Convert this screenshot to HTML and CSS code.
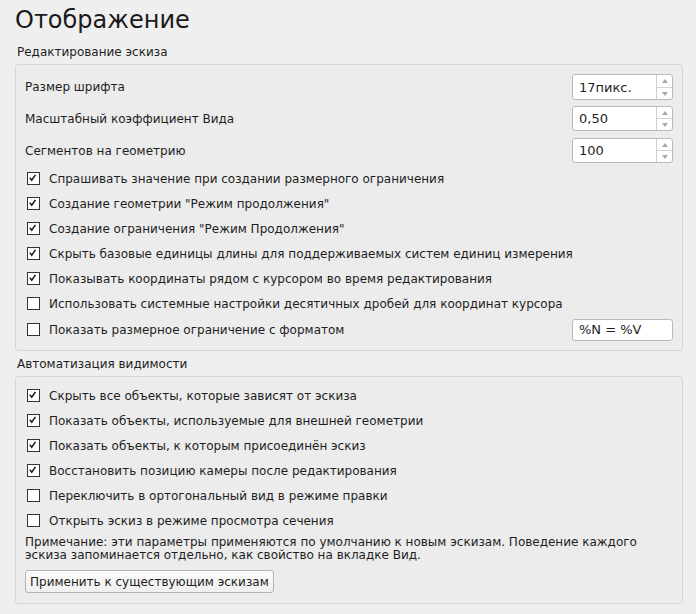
FILE: index.html
```html
<!DOCTYPE html>
<html lang="ru">
<head>
<meta charset="utf-8">
<title>Отображение</title>
<link rel="stylesheet" href="styles.css">
</head>
<body>
<div class="page">
  <h1 class="title">Отображение</h1>

  <div class="section-label">Редактирование эскиза</div>
  <div class="group g1">
    <div class="spin-row r1">
      <span class="lbl">Размер шрифта</span>
      <div class="spin"><span class="val">17пикс.</span><span class="arrows"><span class="up"></span><span class="down"></span></span></div>
    </div>
    <div class="spin-row r2">
      <span class="lbl">Масштабный коэффициент Вида</span>
      <div class="spin"><span class="val">0,50</span><span class="arrows"><span class="up"></span><span class="down"></span></span></div>
    </div>
    <div class="spin-row r3">
      <span class="lbl">Сегментов на геометрию</span>
      <div class="spin"><span class="val">100</span><span class="arrows"><span class="up"></span><span class="down"></span></span></div>
    </div>
    <div class="checks">
      <div class="check on"><span class="box"><svg viewBox="0 0 13 13"><path d="M3.2 6.6 L5.4 9.4 L9.8 3.2"/></svg></span><span>Спрашивать значение при создании размерного ограничения</span></div>
      <div class="check on"><span class="box"><svg viewBox="0 0 13 13"><path d="M3.2 6.6 L5.4 9.4 L9.8 3.2"/></svg></span><span>Создание геометрии "Режим продолжения"</span></div>
      <div class="check on"><span class="box"><svg viewBox="0 0 13 13"><path d="M3.2 6.6 L5.4 9.4 L9.8 3.2"/></svg></span><span>Создание ограничения "Режим Продолжения"</span></div>
      <div class="check on"><span class="box"><svg viewBox="0 0 13 13"><path d="M3.2 6.6 L5.4 9.4 L9.8 3.2"/></svg></span><span>Скрыть базовые единицы длины для поддерживаемых систем единиц измерения</span></div>
      <div class="check on"><span class="box"><svg viewBox="0 0 13 13"><path d="M3.2 6.6 L5.4 9.4 L9.8 3.2"/></svg></span><span>Показывать координаты рядом с курсором во время редактирования</span></div>
      <div class="check"><span class="box"></span><span>Использовать системные настройки десятичных дробей для координат курсора</span></div>
      <div class="check with-field"><span class="box"></span><span class="grow">Показать размерное ограничение с форматом</span><span class="field">%N = %V</span></div>
    </div>
  </div>

  <div class="section-label s2">Автоматизация видимости</div>
  <div class="group g2">
    <div class="checks">
      <div class="check on"><span class="box"><svg viewBox="0 0 13 13"><path d="M3.2 6.6 L5.4 9.4 L9.8 3.2"/></svg></span><span>Скрыть все объекты, которые зависят от эскиза</span></div>
      <div class="check on"><span class="box"><svg viewBox="0 0 13 13"><path d="M3.2 6.6 L5.4 9.4 L9.8 3.2"/></svg></span><span>Показать объекты, используемые для внешней геометрии</span></div>
      <div class="check on"><span class="box"><svg viewBox="0 0 13 13"><path d="M3.2 6.6 L5.4 9.4 L9.8 3.2"/></svg></span><span>Показать объекты, к которым присоединён эскиз</span></div>
      <div class="check on"><span class="box"><svg viewBox="0 0 13 13"><path d="M3.2 6.6 L5.4 9.4 L9.8 3.2"/></svg></span><span>Восстановить позицию камеры после редактирования</span></div>
      <div class="check"><span class="box"></span><span>Переключить в ортогональный вид в режиме правки</span></div>
      <div class="check"><span class="box"></span><span>Открыть эскиз в режиме просмотра сечения</span></div>
    </div>
    <p class="note">Примечание: эти параметры применяются по умолчанию к новым эскизам. Поведение каждого эскиза запоминается отдельно, как свойство на вкладке Вид.</p>
    <div class="btn-row"><button class="btn">Применить к существующим эскизам</button></div>
  </div>
</div>
</body>
</html>
```

FILE: styles.css
```css
html, body {
  margin: 0;
  padding: 0;
  background: #efefef;
}
body {
  font-family: "DejaVu Sans", "Noto Sans", sans-serif;
  font-size: 12px;
  color: #1e1e1e;
  width: 696px;
  height: 614px;
  overflow: hidden;
}
.page {
  padding: 0 13px 0 15px;
}
.title {
  margin: 0;
  box-sizing: border-box;
  height: 40px;
  padding-top: 6px;
  font-size: 24px;
  font-weight: normal;
  line-height: 28px;
  color: #1a1a1a;
}
.section-label {
  height: 24px;
  line-height: 24px;
  padding-left: 2px;
}
.section-label.s2 {
  height: 25px;
  line-height: 26px;
}
.group {
  border: 1px solid #d6d6d6;
  border-radius: 3px;
  background: #ececec;
  padding: 9px 9px 7px 9px;
}
.g2 {
  padding-top: 6px;
  padding-bottom: 10px;
}
.spin-row {
  display: flex;
  align-items: center;
  justify-content: space-between;
}
.spin-row.r1 {
  margin-bottom: 6px;
}
.spin-row.r2 {
  margin-bottom: 7px;
}
.spin {
  box-sizing: border-box;
  width: 101px;
  height: 25px;
  border: 1px solid #b9b9b9;
  border-radius: 3px;
  background: #fff;
  display: flex;
  align-items: stretch;
}
.r1 .spin {
  height: 26px;
}
.spin .val {
  flex: 1;
  padding-left: 6px;
  display: flex;
  align-items: center;
  font-size: 13px;
}
.arrows {
  width: 15px;
  border-left: 1px solid #cfcfcf;
  display: flex;
  flex-direction: column;
}
.arrows span {
  flex: 1;
  position: relative;
}
.arrows .up {
  border-bottom: 1px solid #d6d6d6;
}
.arrows .up::after,
.arrows .down::after {
  content: "";
  position: absolute;
  left: 5px;
  top: 4px;
  border-left: 3px solid transparent;
  border-right: 3px solid transparent;
}
.arrows .up::after {
  border-bottom: 4px solid #a8a8a8;
}
.arrows .down::after {
  top: 4px;
  border-top: 4px solid #a8a8a8;
}
.checks {
  padding-left: 2px;
}
.g1 .checks {
  margin-top: 3px;
}
.check {
  display: flex;
  align-items: center;
  height: 25px;
}
.check .box {
  width: 11px;
  height: 11px;
  border: 1px solid #333;
  background: #fff;
  margin-right: 9px;
  flex: none;
  display: flex;
}
.check .box svg {
  width: 11px;
  height: 11px;
}
.check .box path {
  fill: none;
  stroke: #1a1a1a;
  stroke-width: 1.8;
  transform: translate(-1px, -1px);
}
.check.with-field {
  height: 27px;
}
.grow {
  flex: 1;
}
.field {
  width: 93px;
  height: 20px;
  line-height: 20px;
  padding-left: 6px;
  border: 1px solid #b9b9b9;
  border-radius: 3px;
  background: #fff;
  font-size: 13px;
}
.note {
  margin: 3px 0 0 0;
  line-height: 13px;
}
.btn-row {
  margin-top: 8px;
}
.btn {
  font-family: "DejaVu Sans", "Noto Sans", sans-serif;
  font-size: 12px;
  color: #1e1e1e;
  height: 23px;
  padding: 0 4px;
  border: 1px solid #b4b4b4;
  border-radius: 3px;
  background: linear-gradient(#fafafa, #f0f0f0);
}
```
